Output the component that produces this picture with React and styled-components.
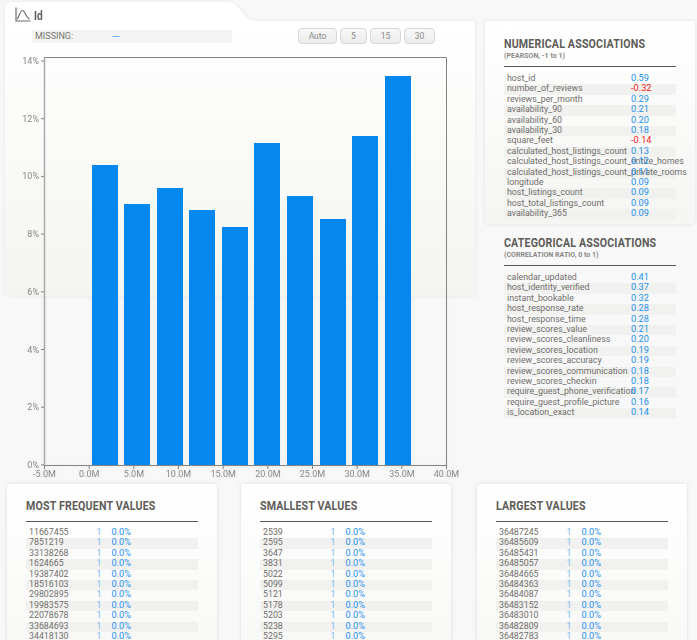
import React from "react";
import styled, { createGlobalStyle } from "styled-components";

const GlobalStyle = createGlobalStyle`
  html, body {
    margin: 0;
    height: 640px;
    overflow: hidden;
    background: #f8f8f8;
    font-family: Roboto, "Liberation Sans", sans-serif;
  }
`;

const Page = styled.div`
  width: 697px;
  height: 640px;
  overflow: hidden;
`;

const TopRow = styled.div`
  display: flex;
  align-items: flex-start;
  height: 484px;
`;

const MainColumn = styled.section`
  width: 470px;
  margin: 2px 0 0 5px;
  filter: drop-shadow(0 0 2px rgba(0, 0, 0, 0.07));
`;

const TabRow = styled.div`
  display: flex;
  height: 19px;
`;

const Tab = styled.div`
  width: 222px;
  display: flex;
  align-items: flex-start;
  gap: 3px;
  padding: 5px 0 0 10px;
  box-sizing: border-box;
  background: #fff;
  border-top-left-radius: 6px;
`;

const TabName = styled.h1`
  margin: 0;
  font-size: 12px;
  line-height: 18px;
  font-weight: 700;
  color: #5e5c59;
  transform: scaleX(0.85);
  transform-origin: left center;
`;

const MainPanel = styled.div`
  height: 275px;
  background: linear-gradient(#fff, #f4f4f0);
  border-radius: 0 4px 0 5px;
`;

const Toolbar = styled.div`
  display: flex;
  align-items: flex-start;
  height: 21px;
  padding: 9px 0 0 27px;
  box-sizing: content-box;
`;

const MissingBar = styled.div`
  width: 197px;
  height: 13px;
  display: flex;
  padding-left: 3px;
  background: #f4f4f4;
  font-size: 9px;
  line-height: 12px;
  color: #77756f;
`;

const MissingLabel = styled.span`
  width: 77px;
`;

const MissingValue = styled.span`
  color: #1a8fef;
`;

const Buttons = styled.div`
  display: flex;
  gap: 3px;
  margin-left: 66px;
  margin-top: -2px;
`;

const RangeButton = styled.button`
  width: ${(p) => p.$width}px;
  height: 16px;
  padding: 0;
  border: 1px solid #d8d8d8;
  border-radius: 4px;
  background: linear-gradient(#f8f8f8, #ececec);
  font-family: inherit;
  font-size: 8.5px;
  color: #8a8a8a;
`;

const ChartSvg = styled.svg`
  display: block;
  overflow: visible;
`;

const SideColumn = styled.aside`
  width: 210px;
  margin: 21px 0 0 10px;
`;

const NumericCard = styled.div`
  height: 203px;
  box-sizing: border-box;
  padding: 16px 19px 0;
  background: linear-gradient(#fff, #f5f5f3);
  border-radius: 4px;
  box-shadow: 0 0 4px rgba(0, 0, 0, 0.1);
`;

const CategoricalBlock = styled.div`
  padding: 12px 19px 0;
`;

const Heading = styled.h2`
  margin: 0;
  font-size: 12.5px;
  line-height: 14px;
  font-weight: 700;
  letter-spacing: 0.2px;
  white-space: nowrap;
  color: #5e5c59;
  transform: scaleX(0.85);
  transform-origin: left center;
`;

const SubHeading = styled.div`
  font-size: 8px;
  line-height: 10px;
  font-weight: 700;
  white-space: nowrap;
  color: #8a8886;
  transform: scaleX(0.88);
  transform-origin: left center;
`;

const Rule = styled.hr`
  margin: ${(p) => p.$top}px 0 ${(p) => p.$bottom}px;
  border: 0;
  border-top: 1px solid #5a5855;
`;

const Rows = styled.div`
  display: grid;
  grid-auto-rows: 10.4px;
`;

const Row = styled.div`
  display: grid;
  grid-template-columns: ${(p) => p.$columns};
  padding-left: 3px;
  font-size: 8.8px;
  line-height: 8.6px;
  white-space: nowrap;
  color: #6f6d6a;
  &:nth-child(even) {
    background: #f1f1ef;
  }
`;

const Value = styled.span`
  font-size: 9.2px;
  color: ${(p) => (p.$negative ? "#f01818" : "#1a8fef")};
`;

const Count = styled.span`
  color: #74b8f0;
`;

const BottomRow = styled.div`
  display: flex;
  align-items: flex-start;
  padding-left: 7px;
`;

const ValueCard = styled.div`
  width: 210px;
  height: 170px;
  box-sizing: border-box;
  margin-right: ${(p) => p.$gap}px;
  padding: 15px 19px 0;
  background: linear-gradient(#fff, #f8f8f6);
  border-radius: 3px;
  box-shadow: 0 0 4px rgba(0, 0, 0, 0.12);
`;

const numerical = [
  ["host_id", "0.59"],
  ["number_of_reviews", "-0.32"],
  ["reviews_per_month", "0.29"],
  ["availability_90", "0.21"],
  ["availability_60", "0.20"],
  ["availability_30", "0.18"],
  ["square_feet", "-0.14"],
  ["calculated_host_listings_count", "0.13"],
  ["calculated_host_listings_count_entire_homes", "0.12"],
  ["calculated_host_listings_count_private_rooms", "0.11"],
  ["longitude", "0.09"],
  ["host_listings_count", "0.09"],
  ["host_total_listings_count", "0.09"],
  ["availability_365", "0.09"],
];

const categorical = [
  ["calendar_updated", "0.41"],
  ["host_identity_verified", "0.37"],
  ["instant_bookable", "0.32"],
  ["host_response_rate", "0.28"],
  ["host_response_time", "0.28"],
  ["review_scores_value", "0.21"],
  ["review_scores_cleanliness", "0.20"],
  ["review_scores_location", "0.19"],
  ["review_scores_accuracy", "0.19"],
  ["review_scores_communication", "0.18"],
  ["review_scores_checkin", "0.18"],
  ["require_guest_phone_verification", "0.17"],
  ["require_guest_profile_picture", "0.16"],
  ["is_location_exact", "0.14"],
];

const valueCards = [
  {
    title: "MOST FREQUENT VALUES",
    gap: 24,
    values: [11667455, 7851219, 33138268, 1624665, 19387402, 18516103, 29802895, 19983575, 22078678, 33684693, 34418130],
  },
  {
    title: "SMALLEST VALUES",
    gap: 26,
    values: [2539, 2595, 3647, 3831, 5022, 5099, 5121, 5178, 5203, 5238, 5295],
  },
  {
    title: "LARGEST VALUES",
    gap: 0,
    values: [36487245, 36485609, 36485431, 36485057, 36484665, 36484363, 36484087, 36483152, 36483010, 36482809, 36482783],
  },
];

// chart coordinates are page pixels, shifted by the svg origin (5, 51)
const bars = [
  [92, 165], [124, 204], [157, 188], [189, 210], [222, 227],
  [254, 143], [287, 196], [320, 219], [352, 136], [385, 76],
];
const yTicks = [14, 12, 10, 8, 6, 4, 2, 0];
const xTicks = ["-5.0M", "0.0M", "5.0M", "10.0M", "15.0M", "20.0M", "25.0M", "30.0M", "35.0M", "40.0M"];

function Chart() {
  const axisColor = "#85837f";
  const labelColor = "#8a8886";
  return (
    <ChartSvg width="470" height="430" viewBox="5 51 470 430" fontSize="9" fontFamily="Roboto, sans-serif">
      {bars.map(([x, top]) => (
        <rect key={x} x={x} y={top} width="26" height={465 - top} fill="#0487ee" />
      ))}
      <path d="M44.5 57.5H446.5V465.5H44.5Z" fill="none" stroke={axisColor} />
      <path d="M44.5 57.5V465.5" stroke="#aaa" strokeWidth="1.5" />
      {yTicks.map((tick, i) => {
        const y = 61 + i * 57.7;
        return (
          <g key={tick}>
            <path d={`M41 ${y}H44`} stroke={axisColor} />
            <text x="39" y={y + 3} textAnchor="end" fill={labelColor}>{tick}%</text>
          </g>
        );
      })}
      {xTicks.map((tick, i) => {
        const x = 44.5 + i * 44.67;
        return (
          <g key={tick}>
            <path d={`M${x} 465V469`} stroke={axisColor} />
            <text x={x} y="476.5" textAnchor="middle" fill={labelColor}>{tick}</text>
          </g>
        );
      })}
    </ChartSvg>
  );
}

function DistributionIcon() {
  return (
    <svg width="16" height="15" viewBox="0 0 16 15" fill="none" stroke="#6f6d69" strokeWidth="1.2">
      <path d="M1 0.5V14H15.5" />
      <path d="M2 12C4 11 5 3.5 7.5 3.5C10 3.5 11 11 14.5 12" />
    </svg>
  );
}

function AssociationRows({ items }) {
  return (
    <Rows>
      {items.map(([name, value]) => (
        <Row key={name} $columns="124px auto">
          <span>{name}</span>
          <Value $negative={value.startsWith("-")}>{value}</Value>
        </Row>
      ))}
    </Rows>
  );
}

export default function App() {
  return (
    <Page>
      <GlobalStyle />
      <TopRow>
        <MainColumn>
          <TabRow>
            <Tab>
              <DistributionIcon />
              <TabName>Id</TabName>
            </Tab>
            <svg width="30" height="19" viewBox="0 0 30 19">
              <path d="M0 0C8 0 10 4 15 10C19 15 23 19 30 19H0Z" fill="#fff" />
            </svg>
          </TabRow>
          <MainPanel>
            <Toolbar>
              <MissingBar>
                <MissingLabel>MISSING:</MissingLabel>
                <MissingValue>---</MissingValue>
              </MissingBar>
              <Buttons>
                <RangeButton $width={39}>Auto</RangeButton>
                <RangeButton $width={27}>5</RangeButton>
                <RangeButton $width={31}>15</RangeButton>
                <RangeButton $width={31}>30</RangeButton>
              </Buttons>
            </Toolbar>
            <Chart />
          </MainPanel>
        </MainColumn>
        <SideColumn>
          <NumericCard>
            <Heading>NUMERICAL ASSOCIATIONS</Heading>
            <SubHeading>(PEARSON, -1 to 1)</SubHeading>
            <Rule $top={5} $bottom={7} />
            <AssociationRows items={numerical} />
          </NumericCard>
          <CategoricalBlock>
            <Heading>CATEGORICAL ASSOCIATIONS</Heading>
            <SubHeading>(CORRELATION RATIO, 0 to 1)</SubHeading>
            <Rule $top={5} $bottom={7} />
            <AssociationRows items={categorical} />
          </CategoricalBlock>
        </SideColumn>
      </TopRow>
      <BottomRow>
        {valueCards.map((card) => (
          <ValueCard key={card.title} $gap={card.gap}>
            <Heading>{card.title}</Heading>
            <Rule $top={8} $bottom={6} />
            <Rows>
              {card.values.map((value) => (
                <Row key={value} $columns="67.5px 15px auto">
                  <span>{value}</span>
                  <Count>1</Count>
                  <Value>0.0%</Value>
                </Row>
              ))}
            </Rows>
          </ValueCard>
        ))}
      </BottomRow>
    </Page>
  );
}
